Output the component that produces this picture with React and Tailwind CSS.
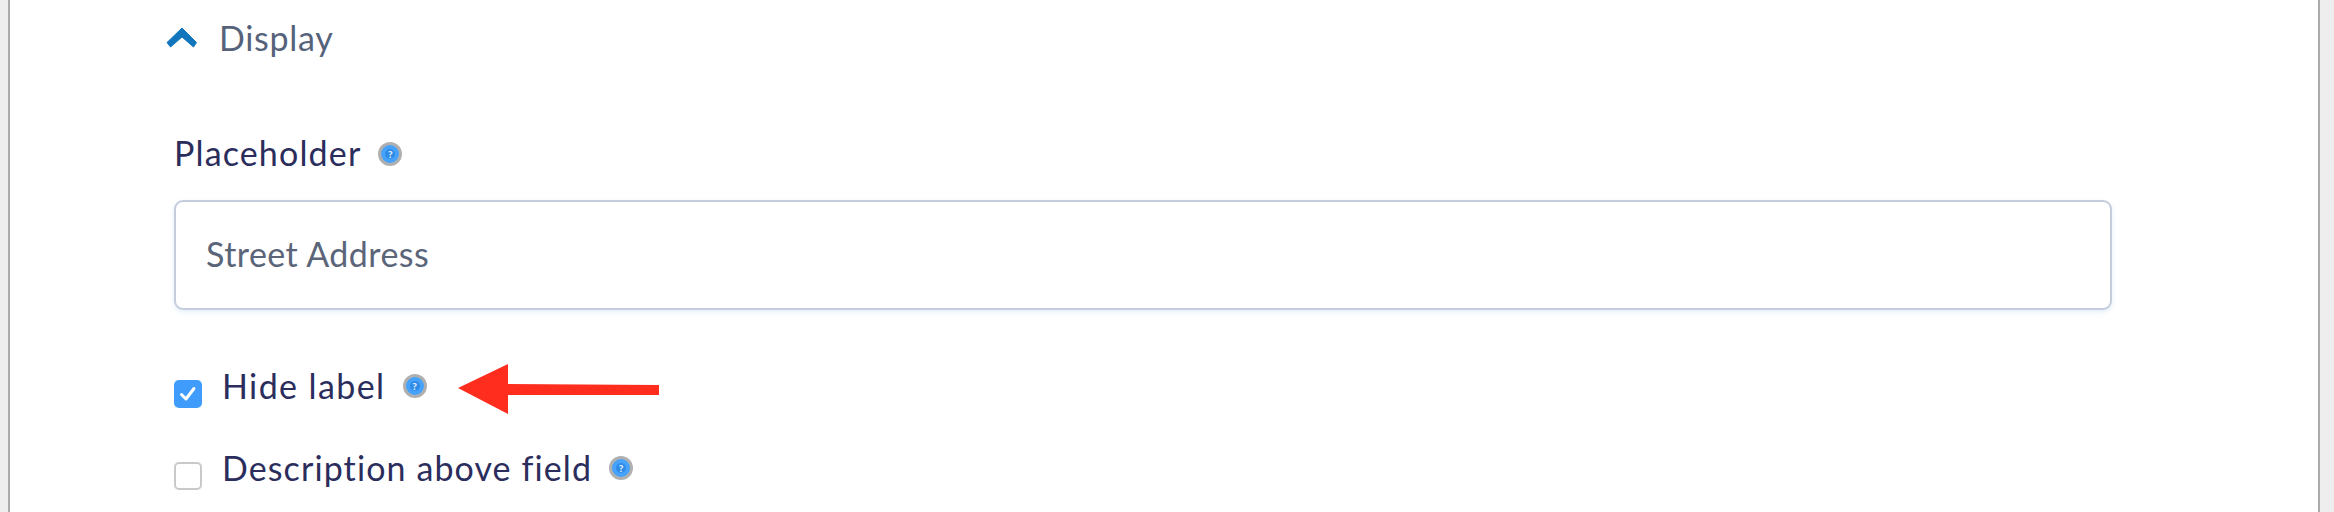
const font = { fontFamily: '"Lato", "Liberation Sans", sans-serif' };

function Info() {
  return (
    <span className="flex h-[24px] w-[24px] shrink-0 items-center justify-center rounded-full border-[3px] border-[#b0b0b0] bg-[#45a3fd]">
      <span className="flex h-[10px] w-[10px] items-center justify-center rounded-full bg-[#2f8be6] text-[10px] font-black leading-none text-[#e4f1ff]">?</span>
    </span>
  );
}

function Check({ on }) {
  return on ? (
    <span className="flex h-[28px] w-[28px] shrink-0 items-center justify-center rounded-[5px] bg-[#409cfb]">
      <svg width="18" height="16" viewBox="0 0 18 16" fill="none">
        <path d="M2.5 8.5 L7 13 L15 2.5" stroke="#fff" strokeWidth="3" strokeLinecap="round" strokeLinejoin="round" />
      </svg>
    </span>
  ) : (
    <span className="block h-[28px] w-[28px] shrink-0 rounded-[5px] border-2 border-[#c9c9c9] bg-white" />
  );
}

export default function App() {
  return (
    <div className="h-[512px] w-[2334px] overflow-hidden bg-[#eeeeee] pl-[8px] pr-[14px]" style={font}>
      <div className="relative h-[512px] border-x-2 border-[#ababab] bg-white pl-[156px] pt-[18px]">
        <div className="flex h-[40px] items-center">
          <svg width="32" height="22" viewBox="0 0 32 22" className="shrink-0">
            <path d="M16 1 L30.5 15.5 L27.5 20 L16 10 L4.5 20 L1 15.5 Z" fill="#1276bd" stroke="#1276bd" strokeWidth="1" strokeLinejoin="round" />
          </svg>
          <span className="ml-[21px] text-[34px] leading-none tracking-[0.7px] text-[#56627a]">Display</span>
        </div>

        <div className="mt-[75px] flex h-[40px] items-center pl-[8px]">
          <span className="text-[34px] leading-none tracking-[1.15px] text-[#2b2d5c]">Placeholder</span>
          <span className="ml-[17px] mt-[1px] block"><Info /></span>
        </div>

        <div className="mt-[27px] ml-[8px] flex h-[110px] w-[1938px] items-center rounded-[9px] border-2 border-[#c5cddd] bg-white pb-[2px] pl-[30px] shadow-[0_2px_5px_rgba(150,190,240,0.25)]">
          <span className="text-[34px] leading-none tracking-[0.45px] text-[#5b6579]">Street Address</span>
        </div>

        <div className="ml-[8px] mt-[58px] flex h-[40px] items-start">
          <span className="mt-[12px] block"><Check on /></span>
          <span className="ml-[20px] -mt-[1px] text-[34px] leading-[38px] tracking-[1.4px] text-[#2b2d5c]">Hide label</span>
          <span className="ml-[17px] mt-[6px] block"><Info /></span>
        </div>

        <div className="ml-[8px] mt-[42px] flex h-[40px] items-start">
          <span className="mt-[12px] block"><Check /></span>
          <span className="ml-[20px] -mt-[1px] text-[34px] leading-[38px] tracking-[1.1px] text-[#2b2d5c]">Description above field</span>
          <span className="ml-[17px] mt-[6px] block"><Info /></span>
        </div>

        <svg className="absolute left-[448px] top-[364px]" width="204" height="50" viewBox="0 0 204 50">
          <path d="M0 24 L50 0 L50 20 L201 21 L201 31 L50 31 L50 50 Z" fill="#ff2d1e" />
        </svg>
      </div>
    </div>
  );
}
